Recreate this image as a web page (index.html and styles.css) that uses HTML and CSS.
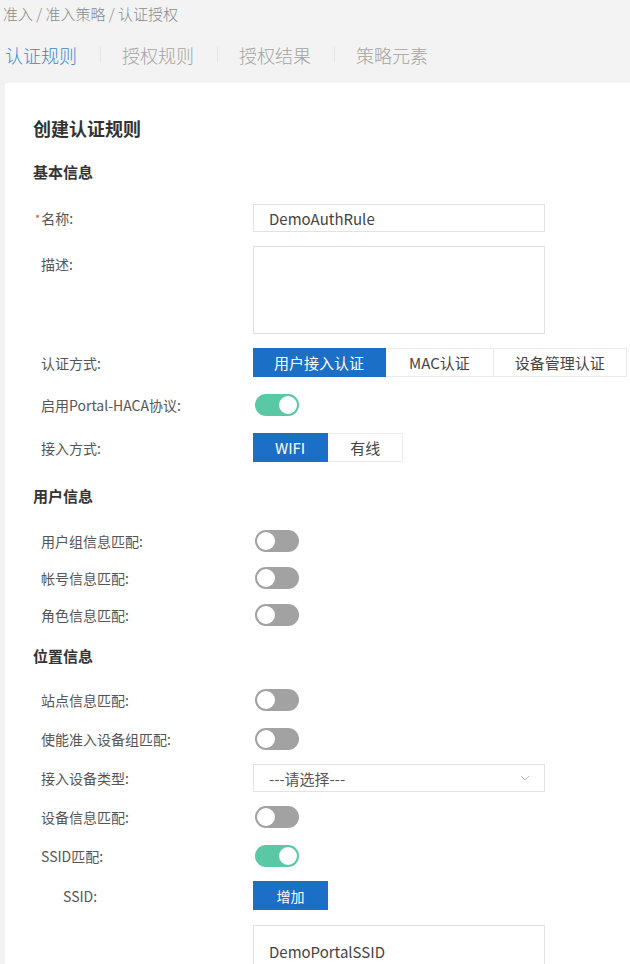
FILE: index.html
```html
<!DOCTYPE html>
<html lang="zh-CN">

<head>
    <meta charset="UTF-8">
    <meta name="viewport" content="width=device-width, initial-scale=1.0">
    <title>认证授权</title>
    <link rel="stylesheet" href="styles.css">
</head>

<body>
    <div class="crumbs">准入 / 准入策略 / 认证授权</div>
    <ul class="tabs">
        <li class="active">认证规则</li>
        <li>授权规则</li>
        <li>授权结果</li>
        <li>策略元素</li>
    </ul>

    <div class="card">
        <h2 class="title">创建认证规则</h2>

        <h3 class="section">基本信息</h3>
        <div class="group group-basic">
            <div class="row">
                <label class="lbl"><span class="req">*</span>名称:</label>
                <input class="field" type="text" value="DemoAuthRule">
            </div>
            <div class="row row-top">
                <label class="lbl">描述:</label>
                <textarea class="field area"></textarea>
            </div>
            <div class="row">
                <label class="lbl">认证方式:</label>
                <div class="seg seg-wide">
                    <button class="on">用户接入认证</button>
                    <button>MAC认证</button>
                    <button>设备管理认证</button>
                </div>
            </div>
            <div class="row">
                <label class="lbl">启用Portal-HACA协议:</label>
                <span class="switch on"></span>
            </div>
            <div class="row">
                <label class="lbl">接入方式:</label>
                <div class="seg">
                    <button class="on">WIFI</button>
                    <button>有线</button>
                </div>
            </div>
        </div>

        <h3 class="section sec-user">用户信息</h3>
        <div class="group group-user">
            <div class="row">
                <label class="lbl">用户组信息匹配:</label>
                <span class="switch"></span>
            </div>
            <div class="row">
                <label class="lbl">帐号信息匹配:</label>
                <span class="switch"></span>
            </div>
            <div class="row">
                <label class="lbl">角色信息匹配:</label>
                <span class="switch"></span>
            </div>
        </div>

        <h3 class="section sec-place">位置信息</h3>
        <div class="group group-place">
            <div class="row">
                <label class="lbl">站点信息匹配:</label>
                <span class="switch"></span>
            </div>
            <div class="row">
                <label class="lbl">使能准入设备组匹配:</label>
                <span class="switch"></span>
            </div>
            <div class="row">
                <label class="lbl">接入设备类型:</label>
                <div class="field select">
                    <span>---请选择---</span>
                    <svg width="10" height="6" viewBox="0 0 10 6"><polyline points="1,1 5,5 9,1" fill="none" stroke="#bbb" stroke-width="1"/></svg>
                </div>
            </div>
            <div class="row">
                <label class="lbl">设备信息匹配:</label>
                <span class="switch"></span>
            </div>
            <div class="row">
                <label class="lbl">SSID匹配:</label>
                <span class="switch on"></span>
            </div>
            <div class="row">
                <label class="lbl sub">SSID:</label>
                <button class="btn">增加</button>
            </div>
            <div class="row row-top ssid-row">
                <span class="lbl"></span>
                <div class="field ssid-box">DemoPortalSSID</div>
            </div>
        </div>
    </div>
</body>

</html>
```

FILE: styles.css
```css
* {
    box-sizing: border-box;
}

body {
    margin: 0;
    height: 964px;
    background: #f3f3f3;
    font-family: "Noto Sans CJK SC", "Noto Sans", sans-serif;
    color: #555;
    overflow: hidden;
}

.crumbs {
    padding: 3px 0 0 3px;
    height: 24px;
    line-height: 22px;
    font-size: 15px;
    font-weight: 300;
    color: #8a8a8a;
}

/* tabs */
.tabs {
    list-style: none;
    margin: 18px 0 0 0;
    padding: 0 0 0 5px;
    display: flex;
    height: 26px;
}

.tabs li {
    font-size: 18px;
    font-weight: 300;
    line-height: 26px;
    color: #a3a3a3;
    padding: 0 22.5px;
    position: relative;
}

.tabs li:first-child {
    padding-left: 0;
}

.tabs li + li::before {
    content: '';
    position: absolute;
    left: 0;
    top: 5px;
    height: 16px;
    border-left: 1px solid #e6e6e6;
}

.tabs li.active {
    color: #3c87d2;
}

/* card */
.card {
    margin: 15px 0 0 5px;
    background: #fff;
    padding: 33px 0 0 28px;
    height: 900px;
    overflow: hidden;
}

.title {
    margin: 0 0 22px 0;
    font-size: 18px;
    line-height: 24px;
    font-weight: bold;
    color: #333;
}

.section {
    margin: 0;
    font-size: 15px;
    line-height: 20px;
    font-weight: bold;
    color: #333;
}

.sec-user {
    margin-top: 24px;
}

.sec-place {
    margin-top: 17px;
}

.group {
    display: flex;
    flex-direction: column;
}

.group-basic {
    margin-top: 22px;
    gap: 14px;
}

.group-user {
    margin-top: 21px;
    gap: 9px;
}

.group-place {
    margin-top: 20px;
    gap: 11px;
}

.row {
    display: flex;
    align-items: center;
    min-height: 28px;
}

.row-top {
    align-items: flex-start;
}

.row-top .lbl {
    padding-top: 8px;
}

.ssid-row {
    margin-top: 4px;
}

.lbl {
    width: 220px;
    flex: none;
    padding-left: 8px;
    font-size: 14px;
    line-height: 20px;
    color: #555;
}

.lbl.sub {
    padding-left: 30px;
}

.req {
    color: #e04848;
    font-size: 11px;
    margin-left: -6px;
    margin-right: 1px;
    vertical-align: 1px;
}

.field {
    flex: none;
    width: 292px;
    height: 28px;
    border: 1px solid #e2e2e2;
    background: #fff;
    font-family: inherit;
    font-size: 15px;
    color: #444;
    padding: 0 14px 0 15px;
    outline: none;
}

.area {
    height: 88px;
    resize: none;
}

.select {
    display: flex;
    align-items: center;
    justify-content: space-between;
    color: #555;
}

.ssid-box {
    height: 100px;
    padding-top: 14px;
    line-height: 24px;
}

/* segmented buttons */
.seg {
    display: flex;
    flex: none;
    height: 29px;
}

.seg button {
    flex: none;
    white-space: nowrap;
    font-family: inherit;
    font-size: 15px;
    color: #444;
    background: #fff;
    border: 1px solid #ececec;
    border-left: none;
    padding: 0 22px;
    height: 29px;
}

.seg-wide button {
    padding: 0 23px;
}

.seg-wide button:first-child,
.seg-wide button:last-child {
    padding: 0 21px;
}

.seg button.on {
    background: #1b6fc6;
    border-color: #1b6fc6;
    color: #fff;
}

.btn {
    font-family: inherit;
    font-size: 14px;
    color: #fff;
    background: #1b6fc6;
    border: none;
    width: 75px;
    height: 29px;
}

/* switches */
.switch {
    display: inline-block;
    position: relative;
    width: 44px;
    height: 22px;
    border-radius: 11px;
    background: #a2a2a2;
    margin-left: 2px;
}

.switch::after {
    content: '';
    position: absolute;
    top: 2px;
    left: 2px;
    width: 18px;
    height: 18px;
    border-radius: 50%;
    background: #fff;
}

.switch.on {
    background: #5ac7a5;
}

.switch.on::after {
    left: 24px;
}
```
